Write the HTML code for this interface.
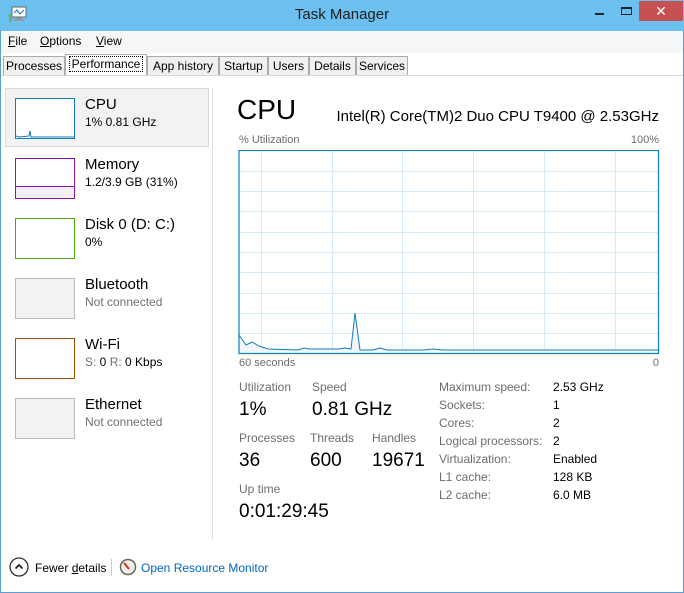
<!DOCTYPE html>
<html><head><meta charset="utf-8"><style>
*{margin:0;padding:0;box-sizing:border-box}
body{width:684px;height:593px;overflow:hidden;background:#fff;font-family:"Liberation Sans","DejaVu Sans",sans-serif;position:relative;color:#000}
.a{position:absolute;white-space:nowrap}
.title{left:0;top:0;width:684px;height:31px;background:#6bc0ef}
.menu{left:0;top:31px;width:684px;height:22px;background:#f5f6f7}
.tab{position:absolute;top:56px;height:20px;background:#f0f0f0;border:1px solid #acacac;border-bottom:none;font-size:12px;text-align:center;line-height:18px}
.thumb{position:absolute;left:15px;width:60px;height:41px;border:1px solid}
.nm{font-size:15px}
.sub{font-size:12px;color:#000}
.g{color:#707070}
.lbl{font-size:12px;color:#6d6d6d}
.big{font-size:19px}
.rl{font-size:12px;color:#6d6d6d}
.rv{font-size:12px}
</style></head><body>
<div class="a title"></div>
<svg class="a" style="left:8px;top:5px" width="20" height="18"><rect x="4" y="2" width="14" height="10" fill="#fff" stroke="#666"/><polyline points="6,8 9,5 12,9 16,5" fill="none" stroke="#2a7ad2" stroke-width="1.2"/><rect x="9" y="12" width="4" height="2" fill="#888"/><rect x="6" y="14" width="10" height="2" fill="#999"/><rect x="1" y="9" width="3" height="8" fill="#7a7"/><rect x="1" y="9" width="3" height="2" fill="#3c3"/></svg>
<div class="a" style="left:0;width:684px;top:6px;text-align:center;font-size:15px;color:#1e1e1e">Task Manager</div>
<div class="a" style="left:595px;top:13px;width:9px;height:2px;background:#222"></div>
<div class="a" style="left:621px;top:7px;width:11px;height:8px;border:1px solid #222;border-top-width:2px"></div>
<div class="a" style="left:639px;top:1px;width:44px;height:20px;background:#c75050;color:#fff;text-align:center;font-size:14px;line-height:20px;font-weight:bold">✕</div>
<div class="a menu"></div>
<div class="a" style="left:8px;top:34px;font-size:12px"><u>F</u>ile</div>
<div class="a" style="left:40px;top:34px;font-size:12px"><u>O</u>ptions</div>
<div class="a" style="left:96px;top:34px;font-size:12px"><u>V</u>iew</div>
<div class="a" style="left:0;top:53px;width:684px;height:23px;background:#fff"></div>
<div class="tab" style="left:3px;width:62px">Processes</div>
<div class="tab" style="left:65px;width:82px;top:54px;height:22px;background:#fff;line-height:18px"><span style="border:1px dotted #000;padding:0 2px">Performance</span></div>
<div class="tab" style="left:147px;width:72px">App history</div>
<div class="tab" style="left:219px;width:49px">Startup</div>
<div class="tab" style="left:268px;width:41px">Users</div>
<div class="tab" style="left:309px;width:47px">Details</div>
<div class="tab" style="left:356px;width:52px">Services</div>
<div class="a" style="left:0;top:75px;width:684px;height:1px;background:#d9d9d9"></div>
<!-- window borders -->
<div class="a" style="left:0;top:31px;width:1px;height:562px;background:#5a9fd4"></div>
<div class="a" style="left:683px;top:31px;width:1px;height:562px;background:#5a9fd4"></div>
<div class="a" style="left:0;top:592px;width:684px;height:1px;background:#5a9fd4"></div>
<!-- sidebar -->
<div class="a" style="left:5px;top:88px;width:204px;height:59px;background:#f2f2f2;border:1px solid #dadada"></div>
<div class="a" style="left:212px;top:88px;width:1px;height:452px;background:#e0e0e0"></div>
<div class="thumb" style="top:98px;border-color:#117dbb;background:#fff"><svg width="58" height="39" style="position:absolute;left:0;top:0"><polyline points="0,37 3,38 13,37 14,32 15,38 58,38" fill="none" stroke="#117dbb"/></svg></div>
<div class="a nm" style="left:85px;top:96px">CPU</div><div class="a sub" style="left:85px;top:115px">1% 0.81 GHz</div>
<div class="thumb" style="top:158px;border-color:#8b12ae;background:#fff"><div style="position:absolute;left:0;top:27px;width:58px;height:12px;background:#f2eef2;border-top:1px solid #8b12ae"></div></div>
<div class="a nm" style="left:85px;top:156px">Memory</div><div class="a sub" style="left:85px;top:175px">1.2/3.9 GB (31%)</div>
<div class="thumb" style="top:218px;border-color:#4da60c;background:#fff"></div>
<div class="a nm" style="left:85px;top:216px">Disk 0 (D: C:)</div><div class="a sub" style="left:85px;top:235px">0%</div>
<div class="thumb" style="top:278px;border-color:#bbb;background:#f2f2f2"></div>
<div class="a nm" style="left:85px;top:276px">Bluetooth</div><div class="a sub g" style="left:85px;top:295px">Not connected</div>
<div class="thumb" style="top:338px;border-color:#a74f01;background:#fff"></div>
<div class="a nm" style="left:85px;top:336px">Wi-Fi</div><div class="a sub" style="left:85px;top:355px"><span class="g">S:</span> 0 <span class="g">R:</span> 0 Kbps</div>
<div class="thumb" style="top:398px;border-color:#bbb;background:#f2f2f2"></div>
<div class="a nm" style="left:85px;top:396px">Ethernet</div><div class="a sub g" style="left:85px;top:415px">Not connected</div>
<!-- main -->
<div class="a" style="left:237px;top:94px;font-size:28px">CPU</div>
<div class="a" style="right:25px;top:108px;font-size:15px">Intel(R) Core(TM)2 Duo CPU T9400 @ 2.53GHz</div>
<div class="a lbl" style="left:239px;top:134px;font-size:11px">% Utilization</div>
<div class="a lbl" style="right:25px;top:134px;font-size:11px">100%</div>
<svg class="a" style="left:238px;top:150px" width="422" height="205">
<g stroke="#d9eaf4" stroke-width="1">
<line x1="23.5" y1="0" x2="23.5" y2="204"/><line x1="94.5" y1="0" x2="94.5" y2="204"/><line x1="164.5" y1="0" x2="164.5" y2="204"/><line x1="235.5" y1="0" x2="235.5" y2="204"/><line x1="306.5" y1="0" x2="306.5" y2="204"/><line x1="377.5" y1="0" x2="377.5" y2="204"/>
<line x1="0" y1="21.5" x2="421" y2="21.5"/><line x1="0" y1="41.5" x2="421" y2="41.5"/><line x1="0" y1="61.5" x2="421" y2="61.5"/><line x1="0" y1="82.5" x2="421" y2="82.5"/><line x1="0" y1="102.5" x2="421" y2="102.5"/><line x1="0" y1="122.5" x2="421" y2="122.5"/><line x1="0" y1="143.5" x2="421" y2="143.5"/><line x1="0" y1="163.5" x2="421" y2="163.5"/><line x1="0" y1="183.5" x2="421" y2="183.5"/>
</g>
<polygon points="1,185 8,195 14,192 21,196 30,199 60,200 66,198 72,199 100,199 107,198 113,199 117,163 122,200 135,200 142,198 149,200 420,200 420,203 1,203" fill="#f1f6fa"/>
<polyline points="1,185 8,195 14,192 21,196 30,199 60,200 66,198 72,199 100,199 107,198 113,199 117,163 122,200 135,200 142,198 149,200 185,200 195,199 205,200 420,200" fill="none" stroke="#117dbb" stroke-width="1"/>
<rect x="1" y="0.5" width="419.5" height="203" fill="none" stroke="#117dbb" stroke-width="1.2"/>
</svg>
<div class="a lbl" style="left:239px;top:357px;font-size:11px">60 seconds</div>
<div class="a lbl" style="right:25px;top:357px;font-size:11px">0</div>
<div class="a lbl" style="left:239px;top:380px">Utilization</div>
<div class="a lbl" style="left:312px;top:380px">Speed</div>
<div class="a big" style="left:239px;top:399px">1%</div>
<div class="a big" style="left:312px;top:399px">0.81 GHz</div>
<div class="a lbl" style="left:239px;top:431px">Processes</div>
<div class="a lbl" style="left:310px;top:431px">Threads</div>
<div class="a lbl" style="left:372px;top:431px">Handles</div>
<div class="a big" style="left:239px;top:450px">36</div>
<div class="a big" style="left:310px;top:450px">600</div>
<div class="a big" style="left:372px;top:450px">19671</div>
<div class="a lbl" style="left:239px;top:482px">Up time</div>
<div class="a big" style="left:239px;top:501px">0:01:29:45</div>
<div class="a rl" style="left:439px;top:380px">Maximum speed:</div><div class="a rv" style="left:553px;top:380px">2.53 GHz</div>
<div class="a rl" style="left:439px;top:398px">Sockets:</div><div class="a rv" style="left:553px;top:398px">1</div>
<div class="a rl" style="left:439px;top:416px">Cores:</div><div class="a rv" style="left:553px;top:416px">2</div>
<div class="a rl" style="left:439px;top:434px">Logical processors:</div><div class="a rv" style="left:553px;top:434px">2</div>
<div class="a rl" style="left:439px;top:452px">Virtualization:</div><div class="a rv" style="left:553px;top:452px">Enabled</div>
<div class="a rl" style="left:439px;top:470px">L1 cache:</div><div class="a rv" style="left:553px;top:470px">128 KB</div>
<div class="a rl" style="left:439px;top:488px">L2 cache:</div><div class="a rv" style="left:553px;top:488px">6.0 MB</div>
<!-- footer -->
<svg class="a" style="left:9px;top:557px" width="20" height="20"><circle cx="10" cy="10" r="9" fill="#fff" stroke="#333" stroke-width="1.3"/><polyline points="6.5,11.5 10,8 13.5,11.5" fill="none" stroke="#222" stroke-width="1.8"/></svg>
<div class="a" style="left:35px;top:561px;font-size:12px">Fewer <u>d</u>etails</div>
<div class="a" style="left:111px;top:559px;width:1px;height:17px;background:#ccc"></div>
<svg class="a" style="left:119px;top:558px" width="18" height="18"><circle cx="9" cy="9" r="7.5" fill="#f4efe6" stroke="#666" stroke-width="1.5"/><line x1="5" y1="5" x2="10" y2="11" stroke="#c33" stroke-width="2"/></svg>
<div class="a" style="left:141px;top:561px;font-size:12px;color:#0066cc">Open Resource Monitor</div>
</body></html>
